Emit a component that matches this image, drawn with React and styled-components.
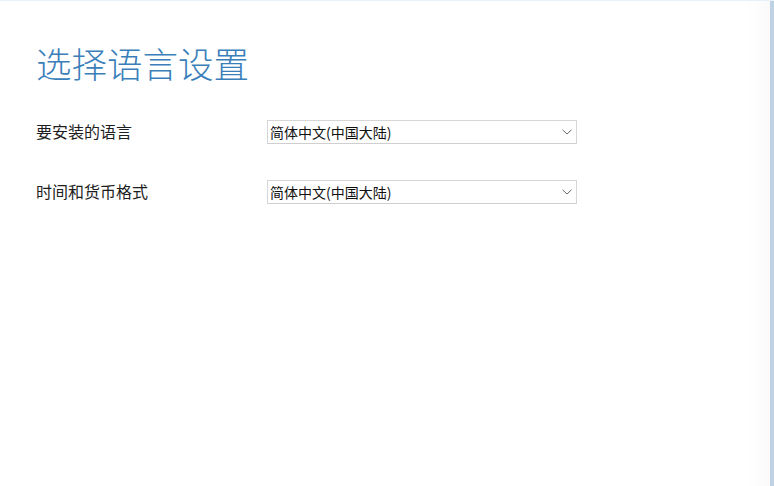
import React from "react";
import styled, { createGlobalStyle } from "styled-components";

const Global = createGlobalStyle`
  html, body { margin: 0; padding: 0; background: #ffffff; }
  body { font-family: "Noto Sans CJK SC", "Noto Sans", sans-serif; }
`;

const Window = styled.div`
  width: 774px;
  height: 486px;
  display: flex;
  box-sizing: border-box;
  border-top: 1px solid #e9f0f7;
  background: #ffffff;
  overflow: hidden;
`;

const Panel = styled.main`
  flex: 1;
  padding: 44px 0 0 36px;
  background: linear-gradient(to right, #ffffff 0, #ffffff 97%, #fafafa 100%);
`;

const EdgeBar = styled.div`
  width: 4px;
  background: #bed1e5;
`;

const Title = styled.h1`
  margin: 0;
  font-family: "Noto Sans CJK SC", sans-serif;
  font-weight: 300;
  font-size: 35.5px;
  line-height: 35px;
  color: #3a7fba;
  letter-spacing: 0;
`;

const Form = styled.div`
  margin-top: 40px;
  display: grid;
  grid-template-columns: 231px 310px;
  grid-auto-rows: 24px;
  row-gap: 36px;
  align-items: center;
`;

const Label = styled.label`
  font-family: "Noto Sans CJK SC", sans-serif;
  font-size: 16px;
  line-height: 24px;
  color: #1e1e1e;
  margin-top: -2px;
`;

const Select = styled.div`
  box-sizing: border-box;
  height: 24px;
  display: flex;
  align-items: center;
  justify-content: space-between;
  padding: 0 4px 0 2px;
  border: 1px solid #d6d6d6;
  border-bottom-color: #cfcfcf;
  background: #ffffff;
  font-family: "Noto Sans CJK SC", sans-serif;
  font-size: 14px;
  color: #111111;
`;

const Chevron = () => (
  <svg width="10" height="6" viewBox="0 0 10 6">
    <path d="M0.5 0.8 L5 5 L9.5 0.8" fill="none" stroke="#6a6a6a" strokeWidth="1" />
  </svg>
);

const rows = [
  { label: "要安装的语言", value: "简体中文(中国大陆)" },
  { label: "时间和货币格式", value: "简体中文(中国大陆)" },
];

export default function App() {
  return (
    <>
      <Global />
      <Window>
        <Panel>
          <Title>选择语言设置</Title>
          <Form>
            {rows.map((r) => (
              <React.Fragment key={r.label}>
                <Label>{r.label}</Label>
                <Select role="combobox">
                  <span>{r.value}</span>
                  <Chevron />
                </Select>
              </React.Fragment>
            ))}
          </Form>
        </Panel>
        <EdgeBar />
      </Window>
    </>
  );
}
